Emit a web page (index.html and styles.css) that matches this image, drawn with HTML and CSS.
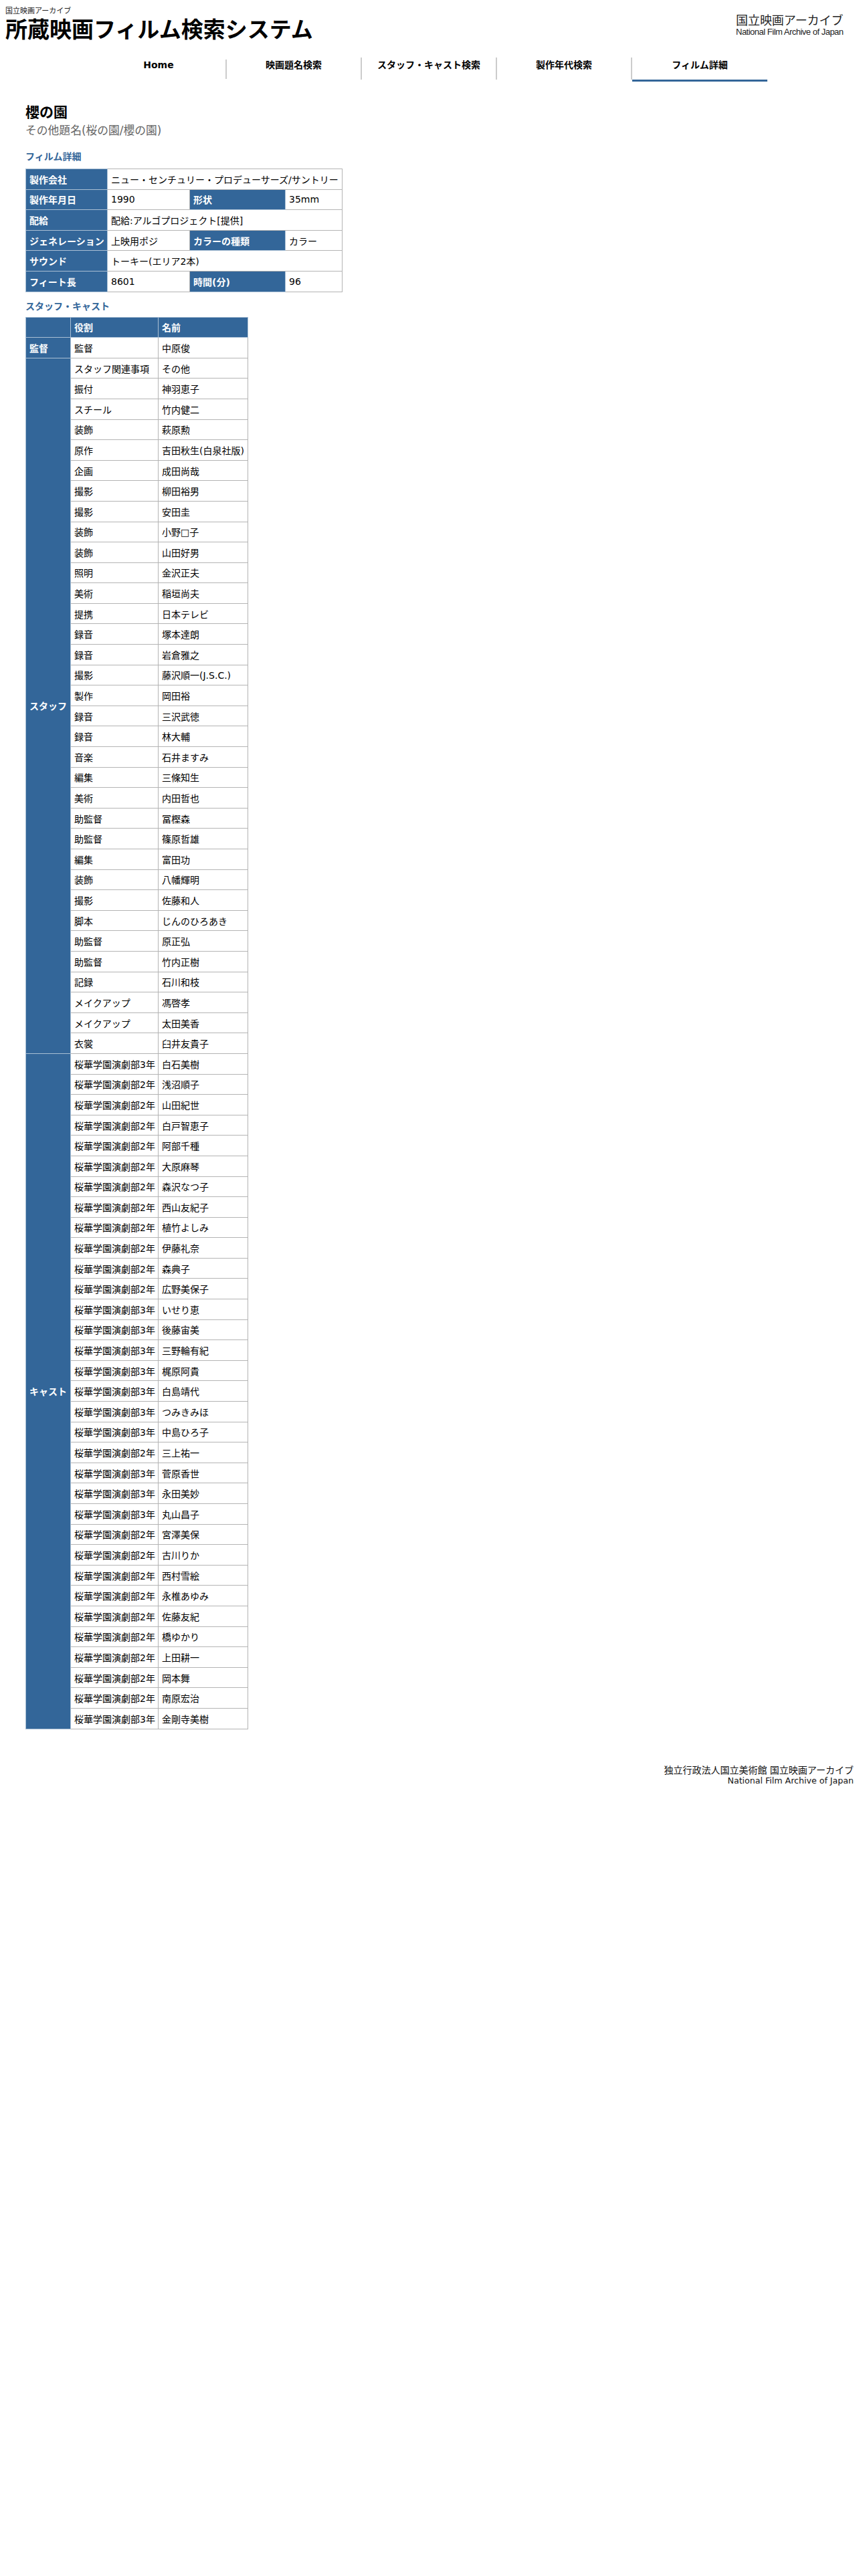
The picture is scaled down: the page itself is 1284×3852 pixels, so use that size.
FILE: index.html
```html
<!DOCTYPE html>
<html lang="ja">
<head>
<meta charset="utf-8">
<title>所蔵映画フィルム検索システム</title>
<link rel="stylesheet" href="styles.css">
</head>
<body>
<header class="top">
  <div class="brand">
    <p class="brand-sub">国立映画アーカイブ</p>
    <p class="brand-title">所蔵映画フィルム検索システム</p>
  </div>
  <div class="logo">
    <p class="logo-ja">国立映画アーカイブ</p>
    <p class="logo-en">National Film Archive of Japan</p>
  </div>
</header>
<nav class="nav">
  <a class="nav-item nav-home">Home</a>
  <a class="nav-item">映画題名検索</a>
  <a class="nav-item">スタッフ・キャスト検索</a>
  <a class="nav-item">製作年代検索</a>
  <a class="nav-item nav-active">フィルム詳細</a>
</nav>
<main class="main">
  <h1 class="film-title">櫻の園</h1>
  <p class="film-alt">その他題名(桜の園/櫻の園)</p>
  <h2 class="section">フィルム詳細</h2>
  <table class="grid detail">
    <colgroup><col class="d1"><col class="d2"><col class="d3"><col class="d4"></colgroup>
    <tr><th>製作会社</th><td colspan="3">ニュー・センチュリー・プロデューサーズ/サントリー</td></tr>
    <tr><th>製作年月日</th><td>1990</td><th>形状</th><td>35mm</td></tr>
    <tr><th>配給</th><td colspan="3">配給:アルゴプロジェクト[提供]</td></tr>
    <tr><th>ジェネレーション</th><td>上映用ポジ</td><th>カラーの種類</th><td>カラー</td></tr>
    <tr><th>サウンド</th><td colspan="3">トーキー(エリア2本)</td></tr>
    <tr><th>フィート長</th><td>8601</td><th>時間(分)</th><td>96</td></tr>
  </table>
  <h2 class="section section-2">スタッフ・キャスト</h2>
  <table class="grid credits">
    <colgroup><col class="c1"><col class="c2"><col class="c3"></colgroup>
    <tr><th></th><th>役割</th><th>名前</th></tr>
    <tr><th>監督</th><td>監督</td><td>中原俊</td></tr>
    <tr><th rowspan="34">スタッフ</th><td>スタッフ関連事項</td><td>その他</td></tr>
    <tr><td>振付</td><td>神羽恵子</td></tr>
    <tr><td>スチール</td><td>竹内健二</td></tr>
    <tr><td>装飾</td><td>萩原勲</td></tr>
    <tr><td>原作</td><td>吉田秋生(白泉社版)</td></tr>
    <tr><td>企画</td><td>成田尚哉</td></tr>
    <tr><td>撮影</td><td>柳田裕男</td></tr>
    <tr><td>撮影</td><td>安田圭</td></tr>
    <tr><td>装飾</td><td>小野□子</td></tr>
    <tr><td>装飾</td><td>山田好男</td></tr>
    <tr><td>照明</td><td>金沢正夫</td></tr>
    <tr><td>美術</td><td>稲垣尚夫</td></tr>
    <tr><td>提携</td><td>日本テレビ</td></tr>
    <tr><td>録音</td><td>塚本達朗</td></tr>
    <tr><td>録音</td><td>岩倉雅之</td></tr>
    <tr><td>撮影</td><td>藤沢順一(J.S.C.)</td></tr>
    <tr><td>製作</td><td>岡田裕</td></tr>
    <tr><td>録音</td><td>三沢武徳</td></tr>
    <tr><td>録音</td><td>林大輔</td></tr>
    <tr><td>音楽</td><td>石井ますみ</td></tr>
    <tr><td>編集</td><td>三條知生</td></tr>
    <tr><td>美術</td><td>内田哲也</td></tr>
    <tr><td>助監督</td><td>冨樫森</td></tr>
    <tr><td>助監督</td><td>篠原哲雄</td></tr>
    <tr><td>編集</td><td>富田功</td></tr>
    <tr><td>装飾</td><td>八幡輝明</td></tr>
    <tr><td>撮影</td><td>佐藤和人</td></tr>
    <tr><td>脚本</td><td>じんのひろあき</td></tr>
    <tr><td>助監督</td><td>原正弘</td></tr>
    <tr><td>助監督</td><td>竹内正樹</td></tr>
    <tr><td>記録</td><td>石川和枝</td></tr>
    <tr><td>メイクアップ</td><td>馮啓孝</td></tr>
    <tr><td>メイクアップ</td><td>太田美香</td></tr>
    <tr><td>衣裳</td><td>臼井友貴子</td></tr>
    <tr><th rowspan="33">キャスト</th><td>桜華学園演劇部3年</td><td>白石美樹</td></tr>
    <tr><td>桜華学園演劇部2年</td><td>浅沼順子</td></tr>
    <tr><td>桜華学園演劇部2年</td><td>山田紀世</td></tr>
    <tr><td>桜華学園演劇部2年</td><td>白戸智恵子</td></tr>
    <tr><td>桜華学園演劇部2年</td><td>阿部千種</td></tr>
    <tr><td>桜華学園演劇部2年</td><td>大原麻琴</td></tr>
    <tr><td>桜華学園演劇部2年</td><td>森沢なつ子</td></tr>
    <tr><td>桜華学園演劇部2年</td><td>西山友紀子</td></tr>
    <tr><td>桜華学園演劇部2年</td><td>植竹よしみ</td></tr>
    <tr><td>桜華学園演劇部2年</td><td>伊藤礼奈</td></tr>
    <tr><td>桜華学園演劇部2年</td><td>森典子</td></tr>
    <tr><td>桜華学園演劇部2年</td><td>広野美保子</td></tr>
    <tr><td>桜華学園演劇部3年</td><td>いせり恵</td></tr>
    <tr><td>桜華学園演劇部3年</td><td>後藤宙美</td></tr>
    <tr><td>桜華学園演劇部3年</td><td>三野輪有紀</td></tr>
    <tr><td>桜華学園演劇部3年</td><td>梶原阿貴</td></tr>
    <tr><td>桜華学園演劇部3年</td><td>白島靖代</td></tr>
    <tr><td>桜華学園演劇部3年</td><td>つみきみほ</td></tr>
    <tr><td>桜華学園演劇部3年</td><td>中島ひろ子</td></tr>
    <tr><td>桜華学園演劇部2年</td><td>三上祐一</td></tr>
    <tr><td>桜華学園演劇部3年</td><td>菅原香世</td></tr>
    <tr><td>桜華学園演劇部3年</td><td>永田美妙</td></tr>
    <tr><td>桜華学園演劇部3年</td><td>丸山昌子</td></tr>
    <tr><td>桜華学園演劇部2年</td><td>宮澤美保</td></tr>
    <tr><td>桜華学園演劇部2年</td><td>古川りか</td></tr>
    <tr><td>桜華学園演劇部2年</td><td>西村雪絵</td></tr>
    <tr><td>桜華学園演劇部2年</td><td>永椎あゆみ</td></tr>
    <tr><td>桜華学園演劇部2年</td><td>佐藤友紀</td></tr>
    <tr><td>桜華学園演劇部2年</td><td>橋ゆかり</td></tr>
    <tr><td>桜華学園演劇部2年</td><td>上田耕一</td></tr>
    <tr><td>桜華学園演劇部2年</td><td>岡本舞</td></tr>
    <tr><td>桜華学園演劇部2年</td><td>南原宏治</td></tr>
    <tr><td>桜華学園演劇部3年</td><td>金剛寺美樹</td></tr>
  </table>
</main>
<footer class="footer">
  <p>独立行政法人国立美術館 国立映画アーカイブ</p>
  <p class="footer-en">National Film Archive of Japan</p>
</footer>
</body>
</html>
```
FILE: styles.css
```css
* { box-sizing: border-box; }
html, body { margin: 0; padding: 0; background: #fff; }
body {
  font-family: "DejaVu Sans", "Noto Sans CJK JP", sans-serif;
  font-size: 14px;
  color: #000;
}
p, h1, h2 { margin: 0; }

.top {
  display: flex;
  justify-content: space-between;
  align-items: flex-start;
  padding: 9px 27px 0 8px;
}
.brand-sub { font-size: 11px; line-height: 16px; color: #222; }
.brand-title { margin-top: 2px; font-size: 33px; line-height: 36px; font-weight: 700; }
.logo { width: 157px; padding-top: 10px; color: #222; }
.logo-ja {
  font-family: "Noto Sans CJK JP", sans-serif;
  font-size: 18px;
  line-height: 20px;
  letter-spacing: -0.05px;
  white-space: nowrap;
}
.logo-en {
  margin-top: 2px;
  font-family: "Liberation Sans", sans-serif;
  font-size: 13px;
  line-height: 14px;
  letter-spacing: -0.5px;
  white-space: nowrap;
}

.nav {
  display: flex;
  justify-content: center;
  align-items: flex-start;
  margin-top: 23px;
}
.nav-item {
  width: 202px;
  height: 33px;
  border-right: 2px solid #ccc;
  text-align: center;
  font-weight: 700;
  line-height: 22px;
}
.nav-home {
  height: 29px;
  margin-top: 3px;
  line-height: 16px;
}
.nav-active {
  height: 36px;
  border-right: 0;
  border-bottom: 3px solid #369;
}

.main { padding-left: 38px; }
.film-title { margin-top: 32px; font-size: 21px; line-height: 28px; font-weight: 700; }
.film-alt { margin-top: 1px; font-size: 16.8px; line-height: 24px; color: #666; }
.section { margin-top: 17px; font-size: 14px; line-height: 20px; font-weight: 700; color: #369; }
.section-2 { margin-top: 11px; }

.grid {
  margin-top: 8px;
  border-collapse: collapse;
  table-layout: fixed;
}
.credits { margin-top: 6px; }
.grid tr { height: 30.6px; }
.grid th, .grid td {
  padding: 0 5px;
  border: 1px solid #b4b4b4;
  text-align: left;
  vertical-align: middle;
  white-space: nowrap;
  font-weight: 400;
  background: #fff;
}
.grid th {
  background: #369;
  color: #fff;
  font-weight: 700;
  border-color: #a9bfd4;
}
.d1 { width: 122px; }
.d2 { width: 123px; }
.d3 { width: 143px; }
.d4 { width: 85px; }
.detail { width: 473px; }
.c1 { width: 67px; }
.c2 { width: 131px; }
.c3 { width: 134px; }
.credits { width: 332px; }

.footer {
  margin-top: 53px;
  padding-right: 8px;
  text-align: right;
  line-height: 16px;
  color: #111;
}
.footer-en { font-size: 12.6px; }
```
